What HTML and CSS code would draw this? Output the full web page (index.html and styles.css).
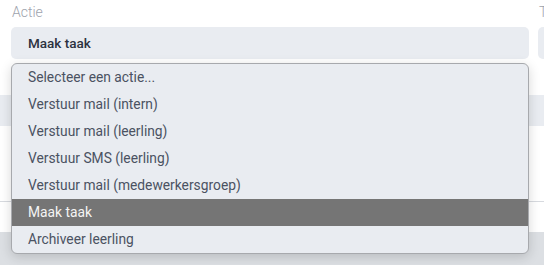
FILE: index.html
```html
<!DOCTYPE html>
<html lang="nl">
<head>
<meta charset="utf-8">
<title>Actie</title>
<link rel="stylesheet" href="styles.css">
</head>
<body>
<div class="page">
  <div class="form-row">
    <div class="field">
      <div class="label">Actie</div>
      <div class="select">Maak taak</div>
      <ul class="dropdown">
        <li>Selecteer een actie...</li>
        <li>Verstuur mail (intern)</li>
        <li>Verstuur mail (leerling)</li>
        <li>Verstuur SMS (leerling)</li>
        <li>Verstuur mail (medewerkersgroep)</li>
        <li class="active">Maak taak</li>
        <li>Archiveer leerling</li>
      </ul>
    </div>
    <div class="field">
      <div class="label">T</div>
      <div class="select"></div>
    </div>
  </div>
  <div class="band"></div>
  <div class="divider"></div>
  <div class="footer"></div>
</div>
</body>
</html>
```

FILE: styles.css
```css
html, body {
  margin: 0;
  padding: 0;
  background: #ffffff;
  font-family: Roboto, "Liberation Sans", Arial, sans-serif;
  overflow: hidden;
}
.page {
  width: 544px;
  height: 265px;
  display: flex;
  flex-direction: column;
}
.form-row {
  display: grid;
  grid-template-columns: 518px 100px;
  column-gap: 9px;
  padding-left: 11px;
}
.field {
  position: relative;
  display: flex;
  flex-direction: column;
}
.label {
  height: 24px;
  line-height: 24px;
  font-size: 14px;
  font-weight: 300;
  color: #9ea3ad;
  padding-left: 1px;
  margin-bottom: 3px;
  white-space: nowrap;
}
.select {
  height: 32px;
  line-height: 32px;
  background: #e9ecf1;
  border-radius: 5px;
  padding-left: 17px;
  font-size: 13.5px;
  font-weight: 500;
  color: #2c3240;
}
.dropdown {
  position: absolute;
  top: 63px;
  left: 0;
  width: 518px;
  box-sizing: border-box;
  margin: 0;
  padding: 0;
  list-style: none;
  background: #e9ecf1;
  border: 1px solid #a7a9ad;
  border-radius: 6px;
  box-shadow: 0 3px 12px rgba(0, 0, 0, 0.16);
  overflow: hidden;
  z-index: 2;
}
.dropdown li {
  height: 27px;
  line-height: 27px;
  padding-left: 16px;
  font-size: 13.8px;
  color: #4b5262;
}
.dropdown li.active {
  background: #757575;
  color: #f4f4f4;
}
.band {
  margin-top: 36px;
  height: 31px;
  background: #e9ecf1;
}
.divider {
  margin-top: 75px;
  height: 1px;
  background: #d7dadf;
}
.footer {
  margin-top: 30px;
  flex: 1;
  background: #dcdfe3;
}
```
